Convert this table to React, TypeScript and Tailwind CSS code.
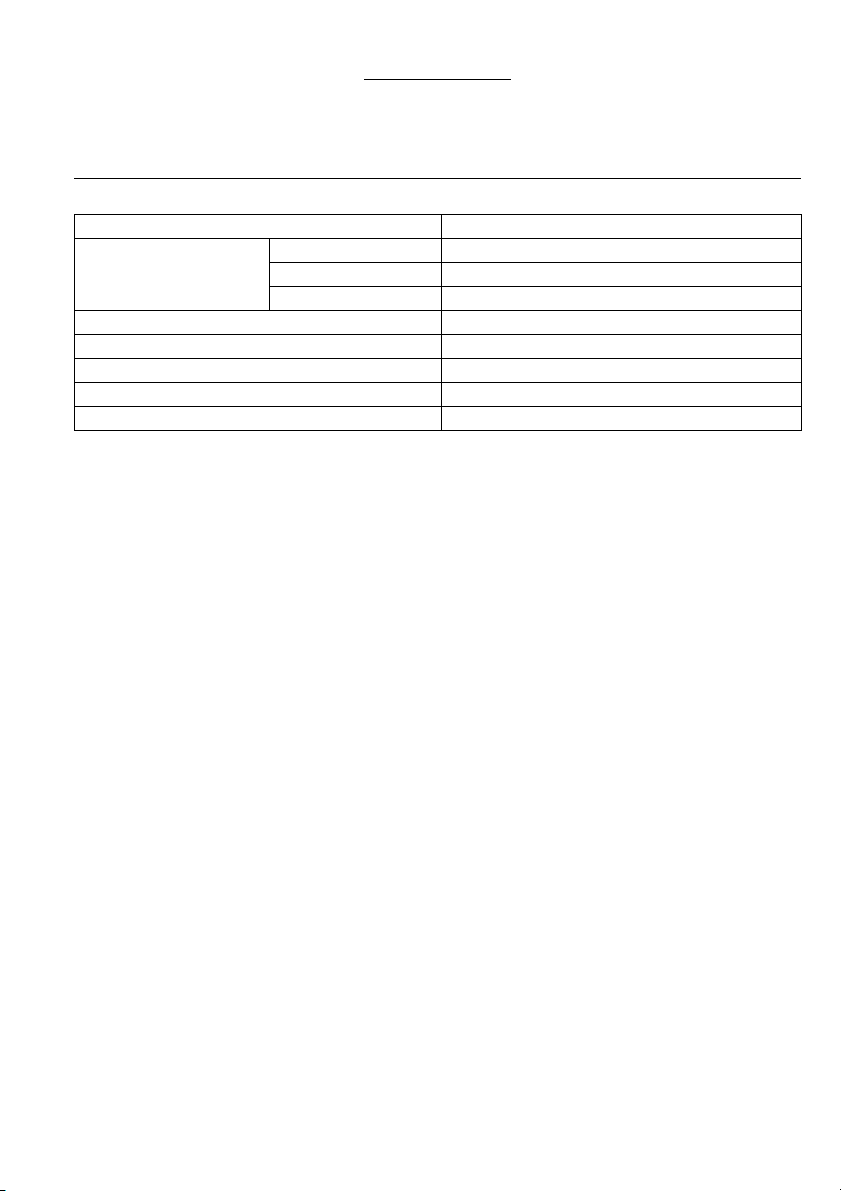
const cell = "border-r border-b border-black";

export default function App() {
  const singleRows = 5;
  return (
    <div className="relative min-h-[1191px] bg-white font-['Liberation_Sans',sans-serif] text-black">
      <div className="ml-[74px] w-[728px] pt-[79px]">
        {/* underlined (empty) heading */}
        <div className="ml-[290px] h-px w-[147px] bg-black" />

        {/* section rule */}
        <div className="mt-[98px] h-px w-[727px] bg-black" />

        {/* form table */}
        <div className="mt-[35px] grid grid-cols-[195px_172px_360px] auto-rows-[24px] border-l border-t border-black">
          <div className={`${cell} col-span-2`} />
          <div className={cell} />

          <div className={`${cell} row-span-3`} />
          <div className={cell} />
          <div className={cell} />
          <div className={cell} />
          <div className={cell} />
          <div className={cell} />
          <div className={cell} />

          {Array.from({ length: singleRows }).map((_, i) => (
            <div key={i} className="contents">
              <div className={`${cell} col-span-2`} />
              <div className={cell} />
            </div>
          ))}
        </div>
      </div>

      {/* scan marks at the page corners */}
      <div className="absolute bottom-0 left-0 h-px w-[5px] bg-black" />
      <div className="absolute bottom-0 left-[5px] h-px w-px bg-cyan-400" />
      <div className="absolute bottom-[1px] right-0 h-px w-px bg-black" />
    </div>
  );
}
